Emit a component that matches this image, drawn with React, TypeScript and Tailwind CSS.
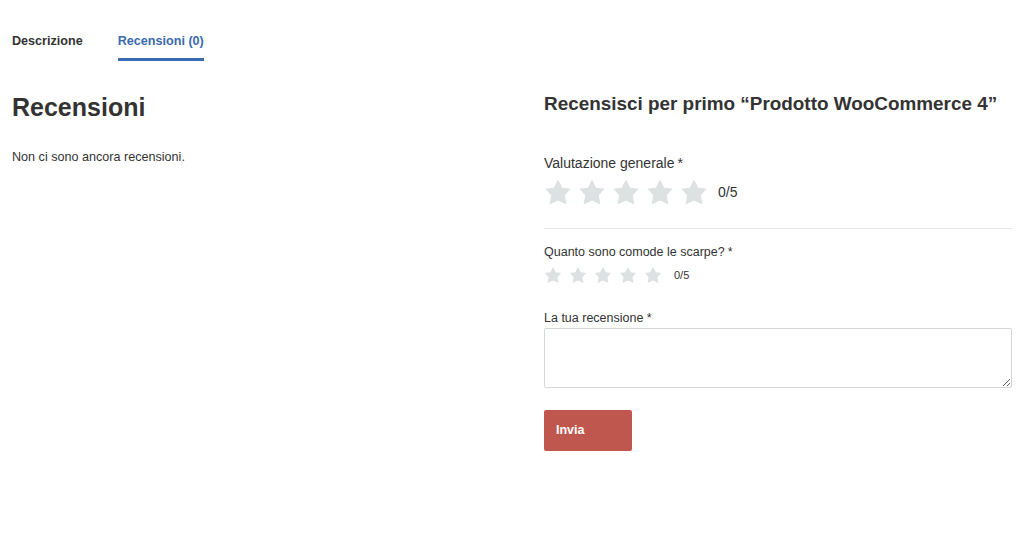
import React from "react";

function Star({ size }: { size: number }) {
  return (
    <svg width={size} height={size} viewBox="0 0 20 20" className="block">
      <path
        d="M10 1l3 6 6 .75-4.12 4.62L16 19l-6-3-6 3 1.13-6.63L1 7.75 7 7z"
        fill="#dde1e2"
      />
    </svg>
  );
}

export default function App() {
  return (
    <div className="min-h-[551px] w-[1024px] bg-white text-[#333] font-['Liberation_Sans',Arial,sans-serif]">
      <div className="flex pl-[12px] pt-[33px]">
        <div className="pb-[9px] text-[12.6px] leading-[16px] font-bold text-[#333] border-b-[3px] border-transparent">
          Descrizione
        </div>
        <div className="ml-[35px] pb-[9px] text-[12.6px] leading-[16px] font-bold text-[#3a6ab1] border-b-[3px] border-[#3a6ab1]">
          Recensioni (0)
        </div>
      </div>

      <div className="grid grid-cols-2 gap-[64px] px-[12px] pt-[31px]">
        <div>
          <h2 className="text-[25px] leading-[30px] font-bold text-[#333]">Recensioni</h2>
          <p className="mt-[27px] text-[12.6px] leading-[16px] text-[#333]">
            Non ci sono ancora recensioni.
          </p>
        </div>

        <div>
          <h3 className="text-[18.9px] leading-[24px] font-bold text-[#333]">
            Recensisci per primo “Prodotto WooCommerce 4”
          </h3>

          <div className="mt-[38px] text-[14px] leading-[18px]">
            Valutazione generale<span className="ml-[3px]">*</span>
          </div>
          <div className="mt-[6px] flex items-center">
            <div className="flex gap-[6px]">
              <Star size={28} />
              <Star size={28} />
              <Star size={28} />
              <Star size={28} />
              <Star size={28} />
            </div>
            <span className="ml-[10px] text-[14px]">0/5</span>
          </div>

          <div className="mt-[22px] border-t border-[#e6e6e6]" />

          <div className="mt-[15px] text-[12.5px] leading-[16px]">
            Quanto sono comode le scarpe?<span className="ml-[3px]">*</span>
          </div>
          <div className="mt-[6px] flex items-center">
            <div className="flex gap-[7px]">
              <Star size={18} />
              <Star size={18} />
              <Star size={18} />
              <Star size={18} />
              <Star size={18} />
            </div>
            <span className="ml-[12px] text-[11px]">0/5</span>
          </div>

          <div className="mt-[26px] text-[12.5px] leading-[16px]">La tua recensione *</div>
          <textarea className="mt-[2px] block w-full h-[60px] border border-[#d4d8d9] rounded-[2px] bg-white" />

          <button className="mt-[22px] w-[88px] h-[41px] rounded-[2px] bg-[#bf574e] text-left pl-[12px] text-white font-bold text-[12.5px]">
            Invia
          </button>
        </div>
      </div>
    </div>
  );
}
